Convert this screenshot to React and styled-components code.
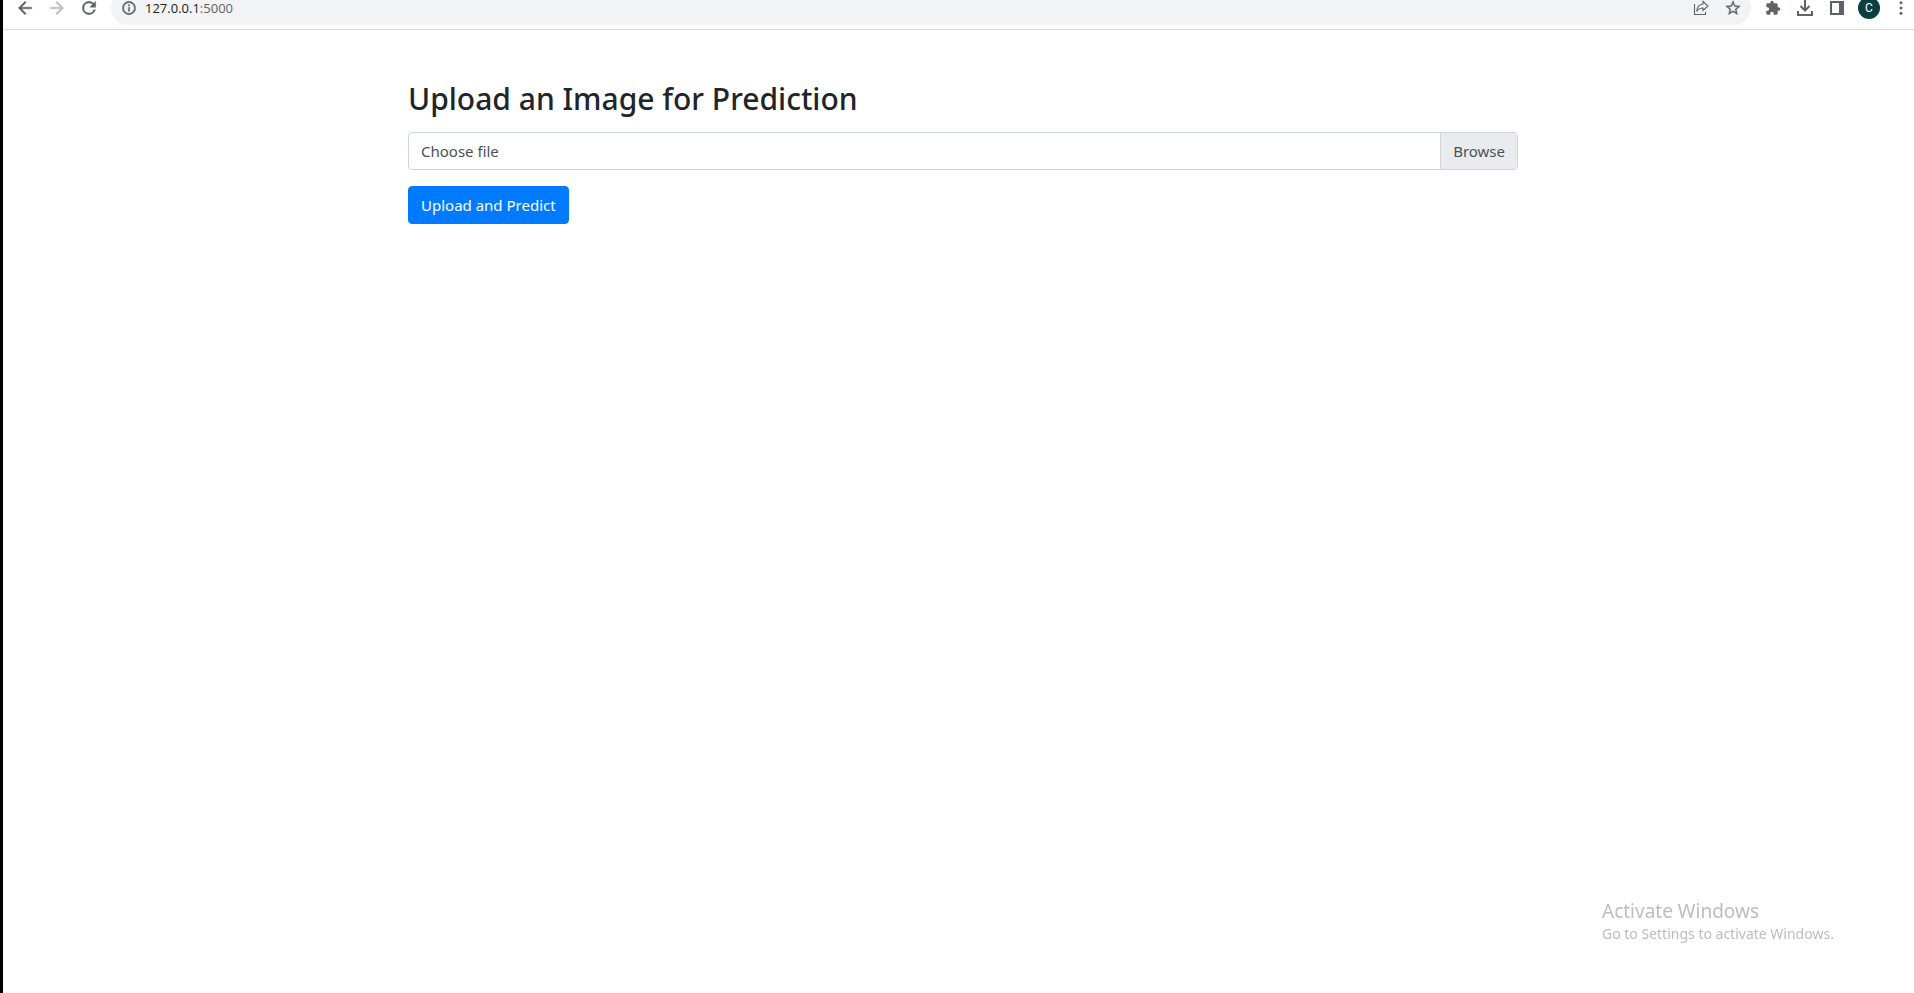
import React, { useState } from "react";
import styled, { createGlobalStyle } from "styled-components";

const GlobalStyle = createGlobalStyle`
  *, *::before, *::after { box-sizing: border-box; }
  html, body { margin: 0; background: #fff; }
  body {
    font-family: "Noto Sans", "Open Sans", sans-serif;
    font-size: 15px;
    line-height: 24px;
    color: #212529;
  }
`;

const Window = styled.div`
  min-height: 100vh;
  border-left: 3px solid #000;
`;

const Toolbar = styled.header`
  display: flex;
  align-items: flex-end;
  gap: 6px;
  height: 30px;
  padding: 0 0 4px 6px;
  border-bottom: 1px solid #dadce0;
  overflow: hidden;
`;

const ButtonGroup = styled.nav`
  display: flex;
  flex: none;
  margin-right: ${(p) => (p.$bleed ? "-3px" : "0")};
`;

const IconButton = styled.button`
  display: flex;
  flex: none;
  align-items: center;
  justify-content: center;
  width: ${(p) => (p.$narrow ? "16px" : "32px")};
  height: 34px;
  padding: 0;
  border: 0;
  background: none;
  color: ${(p) => (p.$muted ? "#babcbe" : "#5f6368")};
`;

const AddressBar = styled.div`
  display: flex;
  flex: 1;
  align-items: center;
  height: 34px;
  padding: 0 2px 0 10px;
  border-radius: 17px;
  background: #f1f3f4;
`;

const Address = styled.div`
  flex: 1;
  padding-left: 8px;
  font-family: "Open Sans", "Noto Sans", sans-serif;
  font-size: 13px;
  line-height: 20px;
  color: #202124;
`;

const Port = styled.span`
  color: #5f6368;
`;

const Avatar = styled.span`
  width: 22px;
  height: 22px;
  border-radius: 50%;
  background: #0d3f40;
  color: #fff;
  font: 12px/22px Roboto, sans-serif;
  text-align: center;
`;

const Page = styled.main`
  padding: 50px 0 0 9px;
`;

const Container = styled.div`
  max-width: 1140px;
  margin: 0 auto;
  padding: 0 15px;
`;

const Title = styled.h1`
  margin: 0 0 14px;
  font-size: 30px;
  font-weight: 500;
  line-height: 38px;
`;

const FileField = styled.label`
  position: relative;
  display: flex;
  height: 38px;
  margin-bottom: 16px;
  border: 1px solid #ced4da;
  border-radius: 4px;
  overflow: hidden;
  color: #495057;
  line-height: 24px;
`;

const FileName = styled.span`
  flex: 1;
  padding: 6px 12px;
`;

const Browse = styled.span`
  padding: 6px 12px;
  border-left: 1px solid #ced4da;
  background: #e9ecef;
`;

const FileInput = styled.input`
  position: absolute;
  inset: 0;
  width: 100%;
  opacity: 0;
`;

const SubmitButton = styled.button`
  height: 38px;
  padding: 0 12px;
  border: 1px solid #007bff;
  border-radius: 4px;
  background: #007bff;
  color: #fff;
  font: inherit;
`;

const Watermark = styled.aside`
  position: fixed;
  right: 76px;
  bottom: 49px;
  min-width: 236px;
  color: #bdbdbd;
  font-size: 14px;
  line-height: 20px;
  pointer-events: none;
`;

const WatermarkTitle = styled.div`
  font-size: 19px;
  line-height: 26px;
`;

const Icon = ({ size = 20, children }) => (
  <svg width={size} height={size} viewBox="0 0 24 24" fill="currentColor" aria-hidden="true">
    {children}
  </svg>
);

export default function App() {
  const [fileName, setFileName] = useState("Choose file");

  return (
    <>
      <GlobalStyle />
      <Window>
        <Toolbar>
          <ButtonGroup aria-label="History">
            <IconButton aria-label="Back">
              <Icon><path d="M20 11H7.83l5.59-5.59L12 4l-8 8 8 8 1.41-1.41L7.83 13H20z" stroke="currentColor" strokeWidth=".5" /></Icon>
            </IconButton>
            <IconButton aria-label="Forward" $muted>
              <Icon><path d="M12 4l-1.41 1.41L16.17 11H4v2h12.17l-5.58 5.59L12 20l8-8z" stroke="currentColor" strokeWidth=".5" /></Icon>
            </IconButton>
            <IconButton aria-label="Reload">
              <Icon><path d="M17.65 6.35A7.96 7.96 0 0 0 12 4a8 8 0 1 0 7.73 10h-2.08A6 6 0 1 1 12 6c1.66 0 3.14.69 4.22 1.78L13 11h7V4z" stroke="currentColor" strokeWidth=".5" /></Icon>
            </IconButton>
          </ButtonGroup>
          <AddressBar>
            <IconButton aria-label="Site information" $narrow>
              <Icon size={16}><path d="M11 17h2v-6h-2v6zm1-15a10 10 0 1 0 0 20 10 10 0 0 0 0-20zm0 18a8 8 0 1 1 0-16 8 8 0 0 1 0 16zM11 9h2V7h-2v2z" stroke="currentColor" strokeWidth=".6" /></Icon>
            </IconButton>
            <Address>127.0.0.1<Port>:5000</Port></Address>
            <IconButton aria-label="Share">
              <svg width="16" height="16" viewBox="0 0 16 16" fill="none" stroke="currentColor" strokeWidth="1.1" aria-hidden="true">
                <path d="M1.5 4v10.5h11V12" />
                <path d="M10 1.5 15 6 10 10.500V8C7 8 5.200 9 3.700 11.500 4 7 6 4.300 10 4z" />
              </svg>
            </IconButton>
            <IconButton aria-label="Bookmark this page">
              <Icon size={18}><path d="M22 9.24l-7.19-.62L12 2 9.19 8.63 2 9.24l5.46 4.73L5.82 21 12 17.27 18.18 21l-1.63-7.03L22 9.24zM12 15.4l-3.76 2.27 1-4.28-3.32-2.88 4.38-.38L12 6.1l1.71 4.04 4.38.38-3.32 2.88 1 4.28L12 15.400z" stroke="currentColor" strokeWidth=".4" /></Icon>
            </IconButton>
          </AddressBar>
          <ButtonGroup aria-label="Browser tools" $bleed>
            <IconButton aria-label="Extensions">
              <Icon size={16}><path d="M20.500 11H19V7a2 2 0 0 0-2-2h-4V3.500a2.500 2.500 0 0 0-5 0V5H4a2 2 0 0 0-2 2v3.800h1.500a2.700 2.700 0 0 1 0 5.400H2V20c0 1.100.9 2 2 2h3.800v-1.500a2.700 2.700 0 0 1 5.400 0V22H17a2 2 0 0 0 2-2v-4h1.500a2.500 2.500 0 0 0 0-5z" /></Icon>
            </IconButton>
            <IconButton aria-label="Downloads">
              <svg width="16" height="16" viewBox="0 0 16 16" fill="none" stroke="currentColor" strokeWidth="2" aria-hidden="true">
                <path d="M8 0v10M3.500 6 8 10.500 12.500 6M1 11v4h14v-4" />
              </svg>
            </IconButton>
            <IconButton aria-label="Side panel">
              <svg width="14" height="14" viewBox="0 0 14 14" aria-hidden="true">
                <path d="M0 0h14v14H0zM2 2v10h7V2z" fill="currentColor" fillRule="evenodd" />
              </svg>
            </IconButton>
            <IconButton aria-label="Profile"><Avatar>C</Avatar></IconButton>
            <IconButton aria-label="Menu">
              <Icon size={18}>
                <circle cx="12" cy="5" r="2" /><circle cx="12" cy="12" r="2" /><circle cx="12" cy="19" r="2" />
              </Icon>
            </IconButton>
          </ButtonGroup>
        </Toolbar>
        <Page>
          <Container>
            <Title>Upload an Image for Prediction</Title>
            <form onSubmit={(e) => e.preventDefault()}>
              <FileField htmlFor="image">
                <FileName>{fileName}</FileName>
                <Browse>Browse</Browse>
                <FileInput
                  id="image"
                  type="file"
                  accept="image/*"
                  onChange={(e) => setFileName(e.target.files[0]?.name ?? "Choose file")}
                />
              </FileField>
              <SubmitButton type="submit">Upload and Predict</SubmitButton>
            </form>
          </Container>
        </Page>
        <Watermark>
          <WatermarkTitle>Activate Windows</WatermarkTitle>
          Go to Settings to activate Windows.
        </Watermark>
      </Window>
    </>
  );
}
